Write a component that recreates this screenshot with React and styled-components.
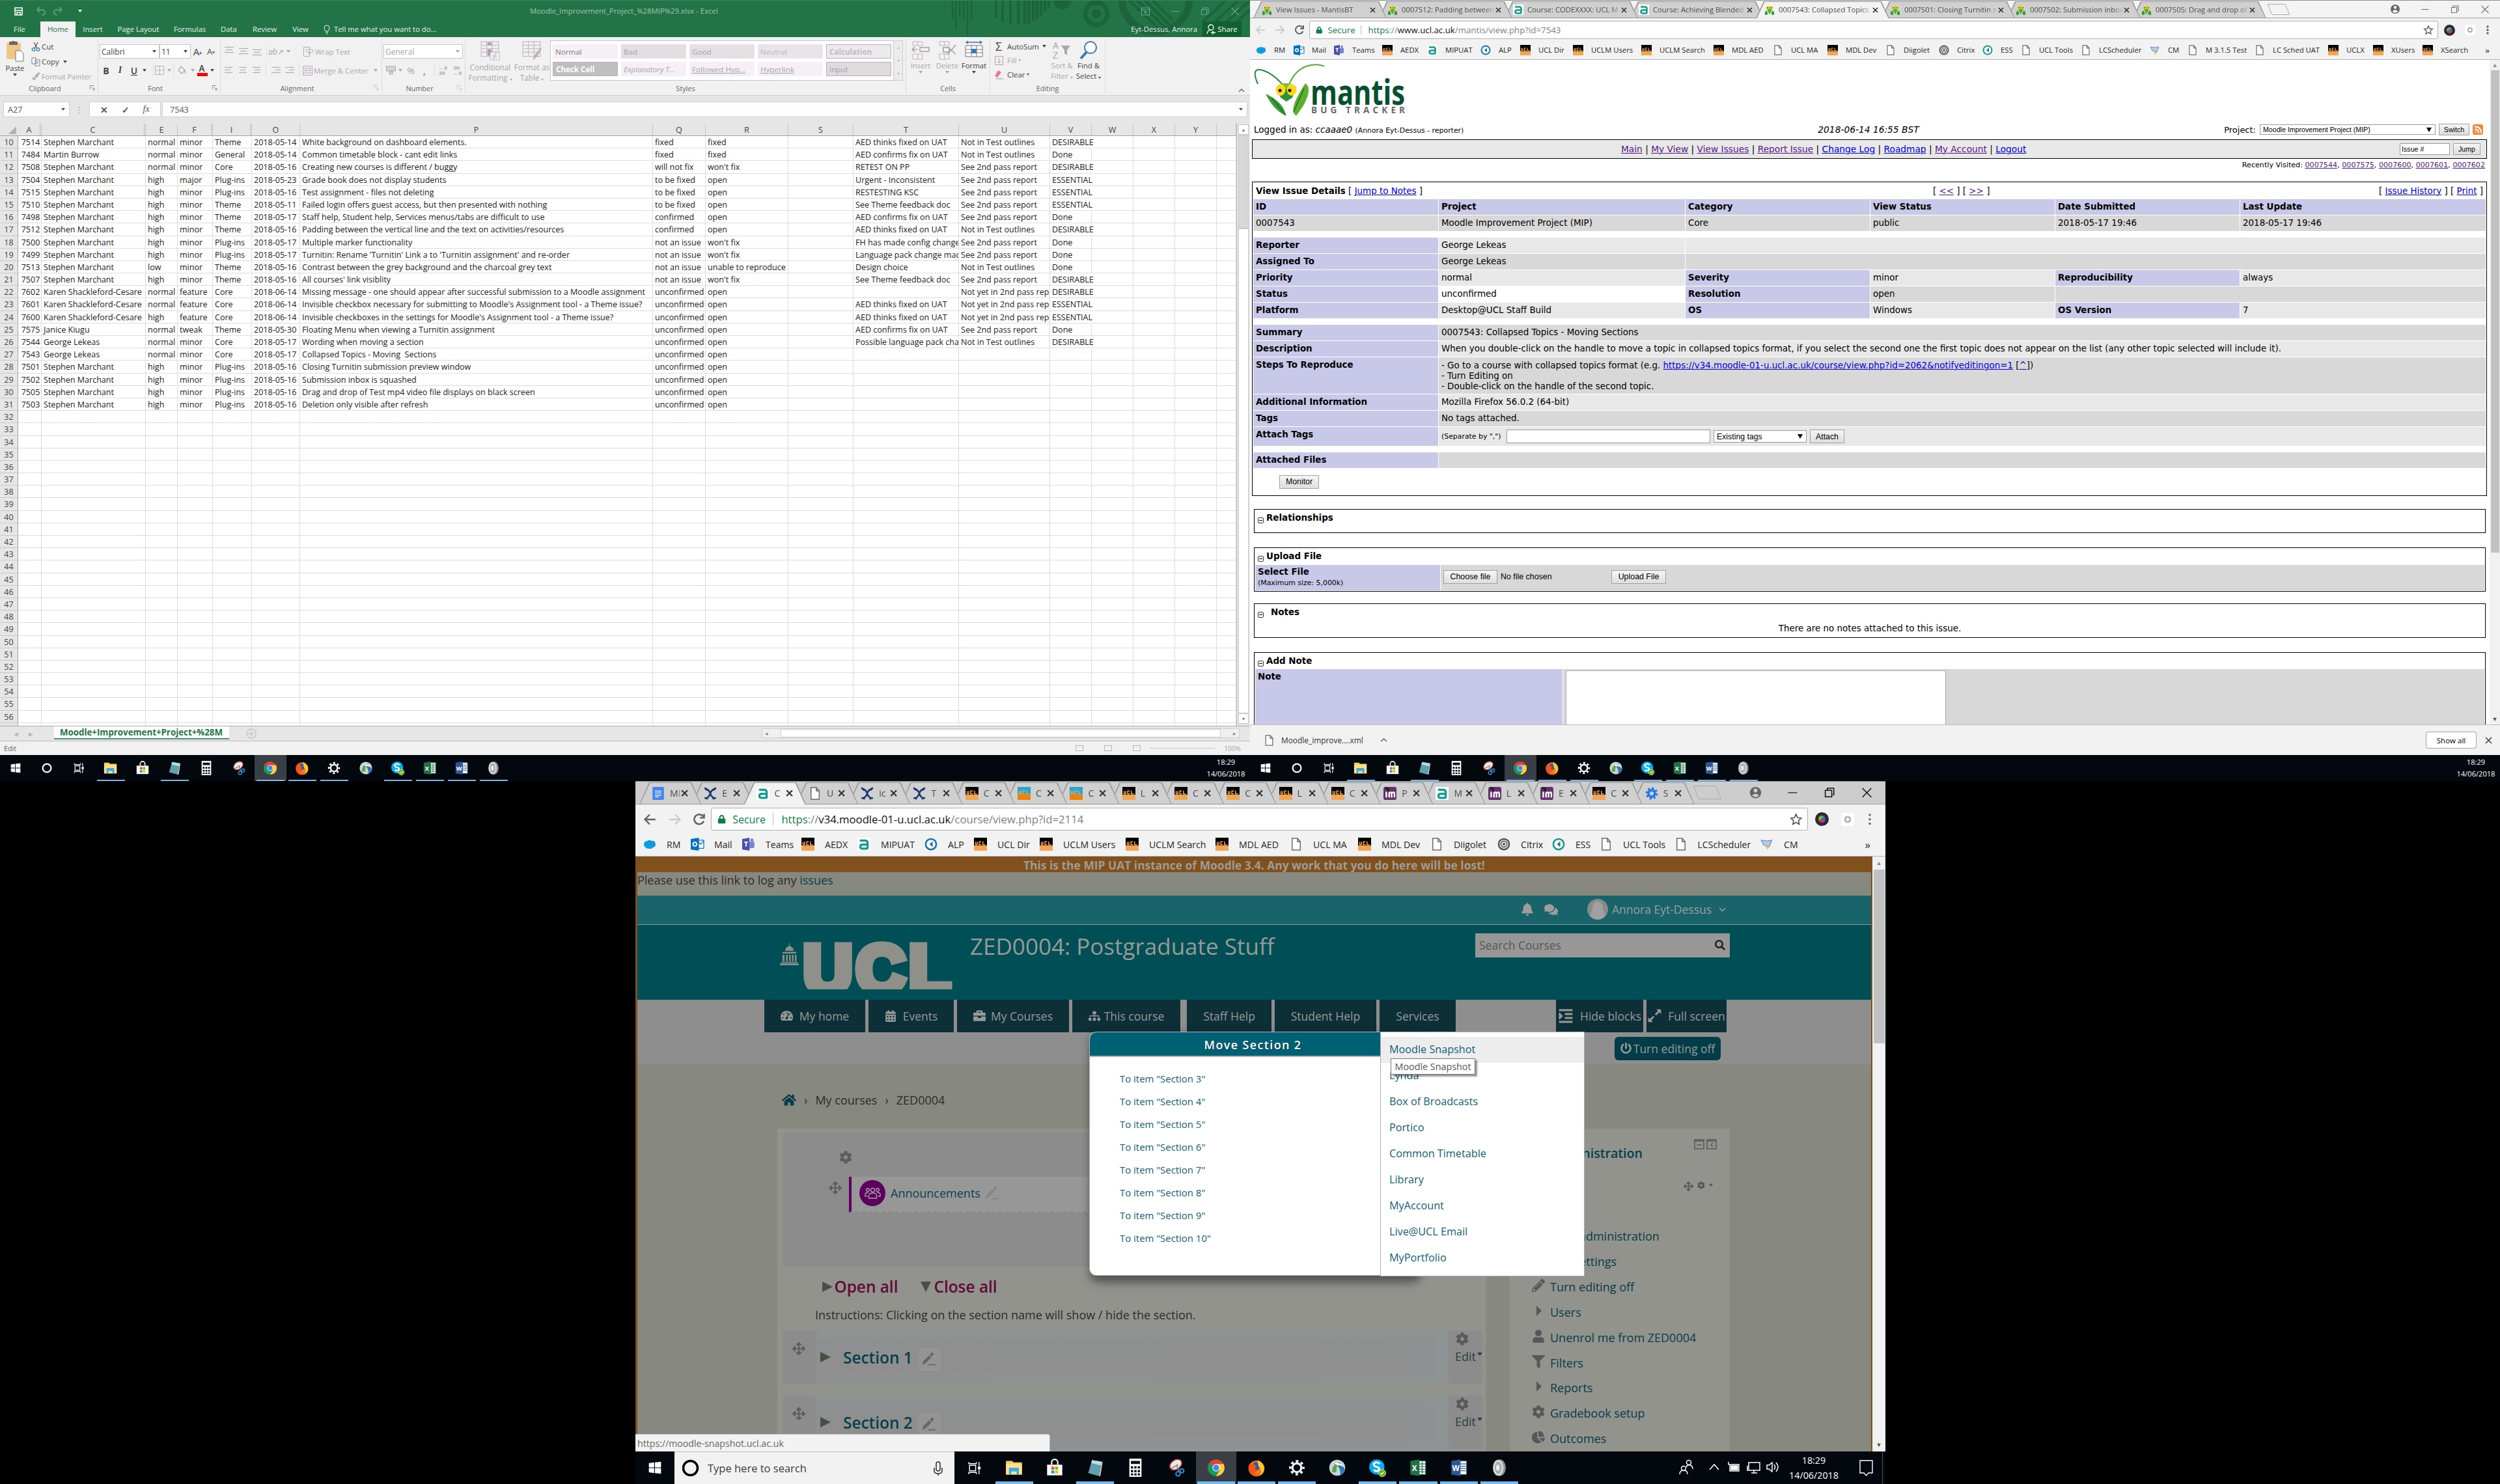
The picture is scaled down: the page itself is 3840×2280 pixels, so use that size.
import React from 'react';
import styled, { createGlobalStyle, css } from 'styled-components';
import {
  FaTachometerAlt, FaCalendarAlt, FaBriefcase, FaSitemap, FaIndent, FaPowerOff, FaBell, FaComments,
  FaSearch, FaHome, FaCog, FaPencilAlt, FaUser, FaFilter, FaChartPie, FaArrowsAlt, FaLock, FaPaintBrush,
} from 'react-icons/fa';

const UI = '"Open Sans", "Noto Sans", sans-serif';
const VERDANA = '"DejaVu Sans", sans-serif';
const ARIAL = '"Liberation Sans", sans-serif';

const Global = createGlobalStyle`
  * { box-sizing: border-box; }
  body { margin: 0; background: #000; }
  svg { display: block; flex: none; overflow: visible; }
`;

const Desktop = styled.main`
  position: relative; width: 3840px; height: 2280px; overflow: hidden;
  background: #000; white-space: nowrap; font-family: ${UI};
`;
const Monitor = styled.section`
  position: absolute; left: ${p => p.$x}px; top: ${p => p.$y}px; width: 1920px; height: ${p => p.$h}px;
  display: flex; flex-direction: column; overflow: hidden;
`;
const Row = styled.div`
  display: flex; align-items: center; flex: none;
  height: ${p => (p.$h ? p.$h + 'px' : 'auto')};
  padding-left: ${p => p.$pl || 0}px; margin-top: ${p => p.$mt || 0}px;
`;
const Slot = styled.span`
  display: flex; flex: none; align-items: center; justify-content: ${p => (p.$left ? 'flex-start' : 'center')};
  width: ${p => p.$w}px; margin-left: ${p => p.$ml || 0}px;
  ${p => p.$dim && css`color: #a9a6a9;`}
`;
const Spring = styled.span`flex: 1;`;
const Caret = styled.i`
  display: inline-block; flex: none; border: ${p => p.$s || 3}px solid transparent; border-bottom: 0;
  border-top-color: currentColor; border-top-width: ${p => (p.$s || 3) + 1}px;
`;

/* ---------- Excel ---------- */

const ExcelTop = styled.header`
  position: relative; flex: none; height: 57px; background: #227447; border-top: 1px solid #3b8159;
  color: #e9f1ec; font-size: 11.3px; overflow: hidden;
`;
const Texture = styled.svg`position: absolute; right: 0; top: 0;`;
const TitleRow = styled.div`
  position: relative; display: flex; align-items: center; height: 32px; color: #a3c4b1;
`;
const DocTitle = styled.span`width: 289px; margin-left: 676px; font-size: 11.37px; line-height: 32px;`;
const TabRow = styled.nav`position: relative; display: flex; height: 24px; line-height: 24px;`;
const RibbonTab = styled.span`
  width: ${p => p.$w}px; text-align: center; flex: none;
  ${p => p.$on && css`background: #f1f1f1; color: #227447; margin: 0 0 0 2px;`}
`;
const TellMe = styled.span`display: flex; align-items: center; gap: 6px; margin-left: 11px;`;
const ShareButton = styled.span`
  display: flex; align-items: center; justify-content: center; gap: 3px; width: 60px; height: 23px;
  margin: 0 13px 0 8px; background: #11602f; color: #fff;
`;

const Ribbon = styled.div`
  display: flex; flex: none; height: 90px; background: #f1f1f1; border-bottom: 1px solid #d0cecf;
  font-size: 11.4px; color: #444;
`;
const Group = styled.section`
  display: flex; flex-direction: column; flex: none; width: ${p => p.$w}px; height: 83px; margin-top: 3px;
  border-right: 1px solid #dadada;
`;
const GroupBody = styled.div`flex: 1; display: flex; flex-direction: ${p => (p.$col ? 'column' : 'row')};`;
const GroupLabel = styled.footer`
  display: flex; justify-content: center; align-items: center; height: 14px; margin-bottom: 1px;
  font-size: 10.9px; color: #666;
  span { flex: 1; text-align: center; }
  svg { margin-right: 4px; }
`;
const Combo = styled.span`
  display: flex; align-items: center; justify-content: space-between; flex: none; width: ${p => p.$w}px; height: 22px;
  margin-left: ${p => p.$ml || 0}px; padding: 0 4px 0 2px; background: #fff; border: 1px solid #c6c6c6;
  color: ${p => (p.$dim ? '#a6a6a6' : '#444')}; font-size: 12px;
`;
const Big = styled.div`
  display: flex; flex-direction: column; align-items: center; width: ${p => p.$w}px; flex: none; line-height: 16px;
  color: ${p => (p.$dim ? '#a9a6a9' : '#444')};
  svg { margin: 3px 0 2px; }
`;
const VRule = styled.i`width: 1px; height: 18px; flex: none; background: #dcdcdc; margin-left: ${p => p.$ml || 0}px;`;
const Gallery = styled.div`
  display: grid; grid-template-columns: repeat(5, 100px); grid-template-rows: 22px 22px; gap: 5px; flex: none;
  width: 528px; height: 62px; margin: 2px 0 0 0; padding: 5px 3px; background: #fff; border: 1px solid #c6c6c6;
`;
const StyleCell = styled.span`
  display: flex; align-items: center; padding-left: 4px; font-size: 11.6px; height: 22px;
  background: ${p => p.$bg}; color: ${p => p.$c || '#a5a2a5'};
  border: ${p => (p.$b ? '1px solid #b5b2b5' : '0')}; font-weight: ${p => (p.$bold ? 700 : 400)};
  font-style: ${p => (p.$i ? 'italic' : 'normal')}; text-decoration: ${p => (p.$u ? 'underline' : 'none')};
`;
const GalleryScroll = styled.div`
  display: flex; flex-direction: column; justify-content: space-around; align-items: center;
  width: 14px; height: 62px; margin-top: 2px; border: 1px solid #cdcdcd; border-left: 0; background: #ececec; color: #bbb;
`;

const FormulaBar = styled.div`
  display: flex; flex: none; height: 43px; padding: 9px 0 0 5px; background: #e6e6e6; font-size: 12.6px; color: #555;
`;
const Field = styled.div`
  display: flex; align-items: center; height: 24px; width: ${p => p.$w}px; margin-left: ${p => p.$ml || 0}px;
  padding: 0 6px; background: #fdfdfd; border: 1px solid #d0d0d0;
`;

const COLS = '28px 36px 160px 49px 54px 60px 74px 542px 81px 127px 100px 162px 140px 64px 64px 64px 64px 30px';
const SheetArea = styled.div`display: flex; flex: none; height: 925px; background: #e6e6e6;`;
const Sheet = styled.div`width: 1900px; height: 925px; overflow: hidden; background: #fff; border-right: 1px solid #b5b5b5;`;
const HeadRow = styled.div`
  display: grid; grid-template-columns: ${COLS}; height: 19px; background: #e6e6e6;
  border-bottom: 1px solid #a5a5a5; font-size: 12.6px; color: #444;
`;
const HeadCell = styled.span`
  text-align: center; line-height: 19.5px; overflow: hidden;
  border-right: ${p => (p.$hiddenAfter ? '3px double #c0c0c0' : '1px solid #c6c6c6')};
`;
const Corner = styled.i`width: 0; height: 0; margin: 4px 0 0 13px; border: 6.5px solid #b1b1b1; border-left-color: transparent; border-top-color: transparent;`;
const SheetRow = styled.div`display: grid; grid-template-columns: ${COLS}; height: 19.2px; font-size: 12.55px; line-height: 20.4px; color: #1c1c1c;`;
const Cell = styled.span`
  height: 19.2px; padding-left: 3px; border-right: 1px solid #dcdcdc; border-bottom: 1px solid #dcdcdc;
  overflow: ${p => (p.$spill ? 'visible' : 'hidden')}; text-align: ${p => (p.$num ? 'center' : 'left')};
  ${p => p.$spill && css`border-right-color: transparent;`}
`;
const RowNo = styled.span`height: 19.2px; background: #e6e6e6; color: #444; text-align: center; border-right: 1px solid #a5a5a5; border-bottom: 1px solid #cacaca;`;
const SheetScroll = styled.div`display: flex; flex-direction: column; width: 20px; padding: 1px 2px 0; align-items: center;`;
const ScrollKnob = styled.div`
  display: flex; align-items: center; justify-content: center; flex: none; width: 16px; height: ${p => p.$h}px;
  background: ${p => p.$bg || '#fff'}; border: 1px solid #c8c8c8; font-size: 7px; color: #777;
`;
const SheetTabs = styled.div`
  display: flex; flex: none; height: 24px; background: #e6e6e6; border-top: 1px solid #ababab; border-bottom: 1px solid #bdbdbd;
  color: #b9b9b9; font-size: 9px;
`;
const SheetTab = styled.span`
  width: 269px; height: 20px; margin-left: 31px; padding-left: 9px; background: #fff; border-bottom: 2px solid #4a9168;
  font: 700 13.3px/18px ${UI}; color: #227447;
`;
const HScroll = styled.div`
  display: flex; align-items: center; justify-content: space-between; width: 734px; height: 15px; margin: 3px 16px 0 auto;
  padding: 0 4px; border: 1px solid #cfcfcf; color: #888; background: #f0f0f0;
  i { width: 676px; height: 13px; background: #fff; border: 1px solid #cfcfcf; }
`;
const StatusBar = styled.div`
  display: flex; align-items: center; gap: 14px; flex: none; height: 21px; padding: 0 14px 0 6px; background: #f1f1f1;
  font-size: 10.8px; color: #666;
  i { width: 12px; height: 9px; border: 1px solid #b5b5b5; }
`;
const Zoom = styled.b`width: 100px; height: 1px; background: #c9c9c9;`;

const PEOPLE = { S: 'Stephen Marchant', K: 'Karen Shackleford-Cesare', G: 'George Lekeas', M: 'Martin Burrow', J: 'Janice Kiugu' };
const AT = 'AED thinks fixed on UAT', AC = 'AED confirms fix on UAT', NT = 'Not in Test outlines', SP = 'See 2nd pass report', NY = 'Not yet in 2nd pass report';
const ISSUES = [
  ['7514', 'S', 'normal', 'minor', 'Theme', '2018-05-14', 'White background on dashboard elements.', 'fixed', 'fixed', AT, NT, 'DESIRABLE'],
  ['7484', 'M', 'normal', 'minor', 'General', '2018-05-14', 'Common timetable block - cant edit links', 'fixed', 'fixed', AC, NT, 'Done'],
  ['7508', 'S', 'normal', 'minor', 'Core', '2018-05-16', 'Creating new courses is different / buggy', 'will not fix', "won't fix", 'RETEST ON PP', SP, 'DESIRABLE'],
  ['7504', 'S', 'high', 'major', 'Plug-ins', '2018-05-23', 'Grade book does not display students', 'to be fixed', 'open', 'Urgent - Inconsistent', SP, 'ESSENTIAL'],
  ['7515', 'S', 'high', 'minor', 'Plug-ins', '2018-05-16', 'Test assignment - files not deleting', 'to be fixed', 'open', 'RESTESTING KSC', SP, 'ESSENTIAL'],
  ['7510', 'S', 'high', 'minor', 'Theme', '2018-05-11', 'Failed login offers guest access, but then presented with nothing', 'to be fixed', 'open', 'See Theme feedback doc', SP, 'ESSENTIAL'],
  ['7498', 'S', 'high', 'minor', 'Theme', '2018-05-17', 'Staff help, Student help, Services menus/tabs are difficult to use', 'confirmed', 'open', AC, SP, 'Done'],
  ['7512', 'S', 'high', 'minor', 'Theme', '2018-05-16', 'Padding between the vertical line and the text on activities/resources', 'confirmed', 'open', AT, NT, 'DESIRABLE'],
  ['7500', 'S', 'high', 'minor', 'Plug-ins', '2018-05-17', 'Multiple marker functionality', 'not an issue', "won't fix", 'FH has made config change', SP, 'Done'],
  ['7499', 'S', 'high', 'minor', 'Plug-ins', '2018-05-17', "Turnitin: Rename 'Turnitin' Link a to 'Turnitin assignment' and re-order", 'not an issue', "won't fix", 'Language pack change made', SP, 'Done'],
  ['7513', 'S', 'low', 'minor', 'Theme', '2018-05-16', 'Contrast between the grey background and the charcoal grey text', 'not an issue', 'unable to reproduce', 'Design choice', NT, 'Done'],
  ['7507', 'S', 'high', 'minor', 'Theme', '2018-05-16', "All courses' link visiblity", 'not an issue', "won't fix", 'See Theme feedback doc', SP, 'DESIRABLE'],
  ['7602', 'K', 'normal', 'feature', 'Core', '2018-06-14', 'Missing message - one should appear after successful submission to a Moodle assignment', 'unconfirmed', 'open', '', NY, 'DESIRABLE'],
  ['7601', 'K', 'normal', 'feature', 'Core', '2018-06-14', "Invisible checkbox necessary for submitting to Moodle's Assignment tool - a Theme issue?", 'unconfirmed', 'open', AT, NY, 'ESSENTIAL'],
  ['7600', 'K', 'high', 'feature', 'Core', '2018-06-14', "Invisible checkboxes in the settings for Moodle's Assignment tool - a Theme issue?", 'unconfirmed', 'open', AT, NY, 'ESSENTIAL'],
  ['7575', 'J', 'normal', 'tweak', 'Theme', '2018-05-30', 'Floating Menu when viewing a Turnitin assignment', 'unconfirmed', 'open', AC, SP, 'Done'],
  ['7544', 'G', 'normal', 'minor', 'Core', '2018-05-17', 'Wording when moving a section', 'unconfirmed', 'open', 'Possible language pack change', NT, 'DESIRABLE'],
  ['7543', 'G', 'normal', 'minor', 'Core', '2018-05-17', 'Collapsed Topics - Moving\u00a0 Sections', 'unconfirmed', 'open', '', '', ''],
  ['7501', 'S', 'high', 'minor', 'Plug-ins', '2018-05-16', 'Closing Turnitin submission preview window', 'unconfirmed', 'open', '', '', ''],
  ['7502', 'S', 'high', 'minor', 'Plug-ins', '2018-05-16', 'Submission inbox is squashed', 'unconfirmed', 'open', '', '', ''],
  ['7505', 'S', 'high', 'minor', 'Plug-ins', '2018-05-16', 'Drag and drop of Test mp4 video file displays on black screen', 'unconfirmed', 'open', '', '', ''],
  ['7503', 'S', 'high', 'minor', 'Plug-ins', '2018-05-16', 'Deletion only visible after refresh', 'unconfirmed', 'open', '', '', ''],
];

const Lines = ({ w = [14, 10, 14], y = [2, 6, 10], x = [0, 0, 0], c = '#b0adb0' }) => (
  <svg width="14" height="14" stroke={c} strokeWidth="1.2">
    {y.map((v, i) => <path key={i} d={`M${x[i]} ${v + 0.5}h${w[i]}`} />)}
  </svg>
);
const TableIcon = ({ s = 28, extra, dark }) => (
  <svg width={s} height={s} viewBox="0 0 28 28" fill="none" stroke="#bcb8bc">
    <rect x="1" y="1" width="25" height="21" fill="#f4eef4" />
    <path d="M1 6h25M1 11h25M1 16h25M9 1v21M17 1v21" />
    {dark && <path d="M10 2h6v4h-6zM10 12h6v9h-6z" fill="#a8a4a8" stroke="none" />}
    {extra}
  </svg>
);
const InsertCells = ({ cross }) => (
  <svg width="28" height="28" viewBox="0 0 28 28" fill="#f6f0f6" stroke="#b9b4b9">
    <path d="M2 1h15v6H2zM2 20h15v8H2zM9.500 1v6M9.500 20v8" />
    {cross ? <path d="M14 9l13 11M27 6L14 21M8 10h9v7H8z" stroke="#a39fa3" strokeWidth="1.600" /> : <path d="M1 13h8M5 9l-4 4 4 4M13 10h14v6H13z" stroke="#a39fa3" strokeWidth="1.500" />}
  </svg>
);
const Launcher = ({ dim }) => (
  <svg width="8" height="8" fill="none" stroke={dim ? '#c5c5c5' : '#888'}><path d="M.5 6V.5H6M3 3l4 4M7 4v3H4" /></svg>
);

function ExcelRibbon() {
  return (
    <Ribbon>
      <Group $w={151}>
        <GroupBody>
          <Big $w={46}>
            <svg width="30" height="32" viewBox="0 0 30 32">
              <path d="M2 3h22v25H2z" fill="#edc886" /><path d="M6 1h13v5H6z" fill="#6b6b6b" /><path d="M10 0h5v3h-5z" fill="#6b6b6b" />
              <path d="M16 15h8l4 4v12H16z" fill="#fff" stroke="#777" />
            </svg>
            Paste<Caret />
          </Big>
          <div>
            <Row $h={23}><Slot $w={18}>
              <svg width="14" height="14" fill="none" stroke="#555" strokeWidth="1.300"><path d="M4 0l5 9M10 0L5 9" /><g stroke="#3c78b4"><circle cx="3.500" cy="11" r="2.300" /><circle cx="10.500" cy="11" r="2.300" /></g></svg>
            </Slot>Cut</Row>
            <Row $h={23}><Slot $w={18}>
              <svg width="14" height="14" fill="#fff" stroke="#6d7f92"><path d="M1 1h6v9H1zM6 4h7v9H6zM8 7h3M8 9h3" /></svg>
            </Slot>Copy<Slot $w={18}><Caret /></Slot></Row>
            <Row $h={22}><Slot $w={18}><FaPaintBrush size={12} color="#b3b0b3" /></Slot><Slot $w={76} $left $dim style={{ fontSize: 10.9 }}>Format Painter</Slot></Row>
          </div>
        </GroupBody>
        <GroupLabel><span>Clipboard</span><Launcher /></GroupLabel>
      </Group>
      <Group $w={188}>
        <GroupBody $col>
          <Row $mt={8} $h={22}>
            <Combo $w={92} $ml={2}>Calibri<Caret /></Combo><Combo $w={48}>11<Caret /></Combo>
            <Slot $w={21} style={{ fontSize: 15 }}>A<sup style={{ fontSize: 8, color: '#3c78b4' }}>▴</sup></Slot>
            <Slot $w={20} style={{ fontSize: 13 }}>A<sup style={{ fontSize: 8, color: '#3c78b4' }}>▾</sup></Slot>
          </Row>
          <Row $mt={7} $h={22}>
            <Slot $w={20} $ml={2} style={{ fontSize: 14 }}><b>B</b></Slot>
            <Slot $w={23} style={{ fontSize: 14, fontStyle: 'italic', fontFamily: 'Liberation Serif' }}><b>I</b></Slot>
            <Slot $w={20} style={{ fontSize: 14, fontWeight: 600 }}><u>U</u></Slot><Slot $w={12}><Caret /></Slot><VRule $ml={7} />
            <Slot $w={17}><svg width="14" height="15" fill="#f6eef6" stroke="#b9b2b9"><path d="M.5.5h13v13H.5zM7 .5v13M.5 7h13" /></svg></Slot>
            <Slot $w={13} $dim><Caret /></Slot><VRule />
            <Slot $w={24}><svg width="14" height="14" fill="none" stroke="#aaa6aa" strokeWidth="1.300"><path d="M6 1l6 6-5 5-5-5zM12 8l1 4" /></svg></Slot>
            <Slot $w={10} $dim><Caret /></Slot>
            <Slot $w={20}><svg width="16" height="18"><text x="2.500" y="11" fontSize="13.500" fontWeight="600" fill="#444">A</text><path d="M0 13h16v5H0z" fill="#f00" /></svg></Slot>
            <Slot $w={10}><Caret /></Slot>
          </Row>
        </GroupBody>
        <GroupLabel><span>Font</span><Launcher /></GroupLabel>
      </Group>
      <Group $w={248}>
        <GroupBody $col>
          <Row $mt={8} $h={22}>
            <Slot $w={26}><Lines y={[0, 4, 8]} x={[0, 2, 0]} /></Slot><Slot $w={18}><Lines x={[0, 2, 0]} /></Slot><Slot $w={24}><Lines y={[4, 8, 12]} x={[0, 2, 0]} /></Slot>
            <VRule $ml={2} /><Slot $w={28} $dim style={{ fontSize: 12 }}><i>ab</i>↗</Slot><Slot $w={10} $dim><Caret /></Slot>
            <Slot $w={14} $ml={18}><svg width="15" height="15" fill="#f6eef6" stroke="#b0acb0"><path d="M.5.5h9v14h-9zM3 4h9q3 0 3 2.500T12 9H7M9 7L7 9l2 2M3 7h3" /></svg></Slot><Slot $w={60} $left $ml={4} $dim>Wrap Text</Slot>
          </Row>
          <Row $mt={7} $h={22}>
            <Slot $w={26}><Lines w={[12, 9, 12]} /></Slot><Slot $w={18}><Lines w={[12, 8, 12]} x={[0, 2, 0]} /></Slot><Slot $w={24}><Lines w={[12, 9, 12]} x={[0, 3, 0]} /></Slot>
            <VRule $ml={1} /><Slot $w={24} $ml={3} $dim><Lines w={[14, 8, 14]} x={[0, 6, 0]} /></Slot><Slot $w={18} $dim><Lines w={[14, 8, 14]} x={[0, 6, 0]} /></Slot><VRule $ml={5} />
            <Slot $w={16} $ml={4}><svg width="15" height="15" fill="#f6eef6" stroke="#b0acb0"><path d="M.5.5h14v14H.5zM.5 4h14M.5 11h14M3 7.500h9M5 5.500l-2 2 2 2M10 5.500l2 2-2 2" /></svg></Slot>
            <Slot $w={87} $left $ml={2} $dim>Merge & Center</Slot><Slot $w={16} $dim><Caret /></Slot>
          </Row>
        </GroupBody>
        <GroupLabel><span>Alignment</span><Launcher dim /></GroupLabel>
      </Group>
      <Group $w={128}>
        <GroupBody $col>
          <Row $mt={8} $h={22}><Combo $w={122} $ml={2} $dim>General<Caret /></Combo></Row>
          <Row $mt={7} $h={22}>
            <Slot $w={22} $ml={2}><svg width="15" height="14" fill="#d8d4d8" stroke="#a9a5a9"><path d="M.5 1h14v7H.5zM5 9h5v4H5z" /></svg></Slot><Slot $w={8} $dim><Caret /></Slot>
            <Slot $w={24} $dim style={{ fontSize: 14 }}>%</Slot><Slot $w={18} $dim style={{ fontSize: 17 }}><b>,</b></Slot><VRule $ml={6} />
            <Slot $w={24} $dim style={{ fontSize: 7.5, lineHeight: '8px', whiteSpace: 'pre' }}><b>{'←.0\n.00'}</b></Slot>
            <Slot $w={20} $dim style={{ fontSize: 7.5, lineHeight: '8px', whiteSpace: 'pre' }}><b>{'.00\n→.0'}</b></Slot>
          </Row>
        </GroupBody>
        <GroupLabel><span>Number</span><Launcher dim /></GroupLabel>
      </Group>
      <Group $w={677}>
        <GroupBody>
          <Big $w={76} $dim style={{ fontSize: 11.7 }}><TableIcon s={30} dark extra={<g><rect x="14" y="16" width="13" height="11" fill="#f7f3f7" /><path d="M17 20h7M17 23h7M22 17l-3 9" /></g>} />Conditional<span>Formatting <Caret $s={2} /></span></Big>
          <Big $w={52} $dim style={{ fontSize: 11.7, marginRight: 2 }}><TableIcon s={30} extra={<path d="M27 9l-9 11-3 7 6-4 7-12z" fill="#b5b1b5" stroke="none" />} />Format as<span>Table <Caret $s={2} /></span></Big>
          <Gallery>
            <StyleCell $bg="#f6f0f6" $c="#7d7a7d">Normal</StyleCell><StyleCell $bg="#e2dee2">Bad</StyleCell><StyleCell $bg="#e4e0e4">Good</StyleCell><StyleCell $bg="#e9e4e9" $c="#bab6ba">Neutral</StyleCell><StyleCell $bg="#eee9ee" $b $bold $c="#c0bcc0">Calculation</StyleCell>
            <StyleCell $bg="#c1bec1" $b $bold $c="#fff">Check Cell</StyleCell><StyleCell $bg="#f6f0f6" $i>Explanatory T...</StyleCell><StyleCell $bg="#f6f0f6" $u>Followed Hyp...</StyleCell><StyleCell $bg="#f6f0f6" $u>Hyperlink</StyleCell><StyleCell $bg="#dedade" $b>Input</StyleCell>
          </Gallery>
          <GalleryScroll><Caret $s={2} style={{ transform: 'scaleY(-1)' }} /><Caret $s={2} /><Caret $s={2} /></GalleryScroll>
        </GroupBody>
        <GroupLabel><span>Styles</span></GroupLabel>
      </Group>
      <Group $w={129}>
        <GroupBody>
          <Big $w={44} $dim><InsertCells />Insert<Caret /></Big>
          <Big $w={38} $dim><InsertCells cross />Delete<Caret /></Big>
          <Big $w={44}>
            <svg width="28" height="28" viewBox="0 0 28 28" fill="#fff" stroke="#777"><path d="M1 7h26v17H1zM1 13h26M1 18h26M10 7v17M18 7v17" /><path d="M10 12h8v7h-8z" fill="#3c78b4" stroke="none" /><path d="M2 2h24M5 0L2 2l3 2M23 0l3 2-3 2" stroke="#3c78b4" strokeWidth="1.500" /></svg>
            Format<Caret />
          </Big>
        </GroupBody>
        <GroupLabel><span>Cells</span></GroupLabel>
      </Group>
      <Group $w={177}>
        <GroupBody>
          <div>
            <Row $h={22}><Slot $w={26} style={{ fontSize: 18 }}>Σ</Slot><Slot $w={50} $left>AutoSum</Slot><Slot $w={14}><Caret /></Slot></Row>
            <Row $h={21}><Slot $w={26}><svg width="13" height="14" fill="#f4eef4" stroke="#aaa6aa"><path d="M.5.5h12v13H.5zM6.500 3v8M4 8l2.500 3L9 8" /></svg></Slot><Slot $left $w={30} $dim>Fill&nbsp;<Caret $s={2} /></Slot></Row>
            <Row $h={23}><Slot $w={26}><svg width="14" height="14"><path d="M6 0l5 3-6 8-4-2z" fill="#e8798c" /><path d="M3 13h11" stroke="#999" /></svg></Slot>Clear&nbsp;<Caret $s={2} /></Row>
          </div>
          <Big $w={40} $dim><svg width="28" height="28" viewBox="0 0 28 28"><text x="0" y="12" fontSize="14" fill="#aaa6aa">A</text><text x="0" y="27" fontSize="14" fill="#aaa6aa">Z</text><path d="M13 7h14l-5 7v8l-4-3v-5z" fill="#aaa6aa" /></svg>Sort &<span>Filter <Caret $s={2} /></span></Big>
          <Big $w={42}><svg width="28" height="28" viewBox="0 0 28 28" fill="none" stroke="#3c78b4"><circle cx="17" cy="10" r="9" strokeWidth="2" fill="#fff" /><path d="M11 17L2 27" strokeWidth="4" /></svg>Find &<span>Select <Caret $s={2} /></span></Big>
        </GroupBody>
        <GroupLabel><span>Editing</span></GroupLabel>
      </Group>
      <Spring />
      <Slot $w={26} style={{ alignItems: 'flex-end', paddingBottom: 4 }}><svg width="8" height="6" fill="none" stroke="#666" strokeWidth="1.500"><path d="M0 5l4-4 4 4" /></svg></Slot>
    </Ribbon>
  );
}

function Excel() {
  return (
    <Monitor $x={0} $y={0} $h={1200}>
      <ExcelTop>
        <Texture width="470" height="57" fill="none" stroke="#1c643c">
          <path d="M13 0v28M18 0v44M24 0v24M30 0v30M36 0v58M42 0v30" strokeWidth="2.500" />
          <path d="M80 0v26M90 0v33M102 0v37M114 0v37M124 0v36M130 0v35M137 0v32M143 0v29M149 0v24M155 0v18M161 0v12" strokeWidth="4" />
          <circle cx="182" cy="0" r="13" fill="#1c643c" /><circle cx="234" cy="20" r="17" strokeWidth="7" /><circle cx="234" cy="20" r="4" strokeWidth="6" />
          <circle cx="325" cy="-4" r="52" strokeWidth="11" /><path d="M285 0l50 48M297 0l46 44M309 0l38 38M321 0l30 30M420 45l50-45M408 40l44-40M396 34l36-34M432 50l38-36" strokeWidth="4" />
        </Texture>
        <TitleRow>
          <Slot $w={56} $left style={{ paddingLeft: 22 }}><svg width="13" height="13" fill="none" stroke="#fff" strokeWidth="1.600"><path d="M1 1h11v11H1zM1 4v1h11M4 12V8h5v4" /></svg></Slot>
          <Slot $w={26} $left><svg width="16" height="12" fill="none" stroke="#5f9b7a" strokeWidth="1.800"><path d="M5 0L1 4l4 4M1 4h7q5 0 5 4t-5 4" /></svg></Slot>
          <Slot $w={26} $left><svg width="16" height="12" fill="none" stroke="#5f9b7a" strokeWidth="1.800"><path d="M9 0l4 4-4 4M13 4H6Q1 4 1 8t5 4" /></svg></Slot>
          <Slot $w={30} style={{ color: '#fff' }}><Caret $s={3} /></Slot>
          <DocTitle>Moodle_Improvement_Project_%28MIP%29.xlsx - Excel</DocTitle>
          <Spring />
          <WinControls $gap={46} $c="#6ea387" $n={4} />
        </TitleRow>
        <TabRow>
          <RibbonTab $w={60}>File</RibbonTab><RibbonTab $w={54} $on>Home</RibbonTab><RibbonTab $w={53}>Insert</RibbonTab>
          <RibbonTab $w={87}>Page Layout</RibbonTab><RibbonTab $w={71}>Formulas</RibbonTab><RibbonTab $w={49}>Data</RibbonTab>
          <RibbonTab $w={61}>Review</RibbonTab><RibbonTab $w={49}>View</RibbonTab>
          <TellMe><svg width="10" height="15" fill="none" stroke="#e9f1ec"><path d="M3 10Q1 7 1 5a4 4 0 0 1 8 0q0 2-2 5zM3 12h4M4 14h2" /></svg>Tell me what you want to do...</TellMe>
          <Spring /><span>Eyt-Dessus, Annora</span>
          <ShareButton><svg width="14" height="16" fill="none" stroke="#fff" strokeWidth="1.300"><circle cx="7" cy="5" r="4" /><path d="M1 15q1-6 6-6M10 10v6M7 13h7" /></svg>Share</ShareButton>
        </TabRow>
      </ExcelTop>
      <ExcelRibbon />
      <FormulaBar>
        <Field $w={102}>A27<Spring /><Caret /></Field>
        <Slot $w={12} $ml={8} style={{ height: 24, color: '#aaa' }}>⋮</Slot>
        <Field $w={110} $ml={10} style={{ justifyContent: 'space-around', fontSize: 14 }}><b>✕</b><b>✓</b><i style={{ fontFamily: 'Liberation Serif' }}>fx</i></Field>
        <Field $w={1667} $ml={2} style={{ paddingLeft: 11 }}>7543<Spring /><Caret /></Field>
      </FormulaBar>
      <SheetArea>
        <Sheet>
          <HeadRow>
            {['', 'A', 'C', 'E', 'F', 'I', 'O', 'P', 'Q', 'R', 'S', 'T', 'U', 'V', 'W', 'X', 'Y', ''].map((c, i) => (
              i === 0 ? <Corner key={i} /> : <HeadCell key={i} $hiddenAfter={[1, 2, 4, 5].includes(i)}>{c}</HeadCell>
            ))}
          </HeadRow>
          {Array.from({ length: 48 }, (_, n) => {
            const r = ISSUES[n];
            const cells = r ? [r[0], PEOPLE[r[1]], r[2], r[3], r[4], r[5], r[6], r[7], r[8], '', r[9], r[10], r[11], '', '', '', ''] : Array(17).fill('');
            return (
              <SheetRow key={n}>
                <RowNo>{n + 10}</RowNo>
                {cells.map((c, i) => <Cell key={i} $num={i === 0} $spill={i === 12 && c.length > 5}>{c}</Cell>)}
              </SheetRow>
            );
          })}
        </Sheet>
        <SheetScroll>
          <ScrollKnob $h={16}>▲</ScrollKnob><ScrollKnob $h={144} $bg="#d8d8d8" /><ScrollKnob $h={745} /><ScrollKnob $h={16}>▼</ScrollKnob>
        </SheetScroll>
      </SheetArea>
      <SheetTabs>
        <Slot $w={8} $ml={20}>◀</Slot><Slot $w={10} $ml={14}>▶</Slot>
        <SheetTab>Moodle+Improvement+Project+%28M</SheetTab>
        <Slot $w={18} $ml={25}><svg width="16" height="16" fill="none" stroke="#c3c3c3" strokeWidth="1.300"><circle cx="8" cy="8" r="7" /><path d="M8 4v8M4 8h8" /></svg></Slot>
        <HScroll>◂<i />▸</HScroll>
      </SheetTabs>
      <StatusBar>Edit<Spring /><i /><Slot $w={4} /><i /><Slot $w={4} /><i /><Zoom /><Slot $w={26} $dim style={{ fontSize: 10 }}>100%</Slot></StatusBar>
      <Taskbar />
    </Monitor>
  );
}

/* ---------- Window controls & taskbar ---------- */

const Controls = styled.div`display: flex; align-items: center; flex: none; svg { width: ${p => p.$gap}px; }`;
function WinControls({ $gap, $c, $n = 3, $k = 1, profile }) {
  const s = 11 * $k, x = ($gap - s) / 2;
  const art = { height: s, fill: 'none', stroke: $c, strokeWidth: 1.2 };
  return (
    <Controls $gap={$gap}>
      {$n === 4 && <svg {...art}><g transform={`translate(${x})`}><path d="M0 0h12v11H0zM0 3h12M6 10V5M4 7l2-2 2 2" /></g></svg>}
      {profile && <svg fill="#666" viewBox="0 0 14 14" height={14 * $k}><path fillRule="evenodd" d="M7 0a7 7 0 1 1 0 14A7 7 0 0 1 7 0zm0 2a2.300 2.300 0 1 0 0 4.700A2.300 2.300 0 0 0 7 2zM2.800 10.500q4.200 4.500 8.400 0-1.500-2.200-4.200-2.200t-4.200 2.200z" /></svg>}
      <svg {...art}><path d={`M${x} ${s / 2}h${s}`} /></svg>
      <svg {...art}><g transform={`translate(${x}) scale(${$k})`}><path d="M0 2.500h8v8H0zM2.500 2V0h8v8H9" /></g></svg>
      <svg {...art}><g transform={`translate(${x}) scale(${$k})`}><path d="M0 0l11 11M11 0L0 11" /></g></svg>
    </Controls>
  );
}

const Bar = styled.footer`
  display: flex; flex: none; height: ${p => p.$h}px; background: #03080f; color: #fff;
`;
const TaskButton = styled.span`
  display: flex; align-items: center; justify-content: center; flex: none; width: ${p => p.$w}px;
  background: ${p => (p.$active ? '#3a3f45' : 'transparent')};
  border-bottom: ${p => p.$u}px solid transparent; border-top: ${p => p.$u}px solid transparent;
  ${p => p.$open && css`border-image: linear-gradient(90deg, transparent 9%, #76b9ed 9%, #76b9ed 91%, transparent 91%) ${p.$u}; border-top-width: 0; padding-top: ${p.$u}px; border-image-width: 0 0 ${p.$u}px 0;`}
`;
const ClockText = styled.time`
  display: flex; flex-direction: column; justify-content: center; align-items: center; text-align: center;
  font-size: ${p => p.$f}px; line-height: ${p => p.$f * 1.62}px; width: ${p => p.$w}px; margin-right: ${p => p.$mr}px;
`;
const SearchBox = styled.div`
  display: flex; align-items: center; width: 430px; flex: none; padding: 0 18px 0 11px; background: #f2f2f2; border-top: 1px solid #bbb;
  font-size: 16.5px; color: #3b3b3b; justify-content: space-between;
  span { flex: 1; padding-left: 13px; }
`;

const ART = {
  start: <path d="M4 6l7-1v6.500H4zM12 5l8-1v7.500h-8zM4 12.500h7V19l-7-1zM12 12.500h8V20l-8-1z" fill="#fff" />,
  cortana: <circle cx="12" cy="12" r="7" fill="none" stroke="#fff" strokeWidth="2.400" />,
  task: <g fill="none" stroke="#fff" strokeWidth="1.400"><path d="M5 8h9v8H5zM4 3v2.500h11V3M4 21v-2.500h11V21M19 3v6M19 15v6" /><path d="M18 10.500h2.500v3H18z" fill="#fff" /></g>,
  explorer: <g><path d="M1 3h8l2 2h11v16H1z" fill="#f5cf63" /><path d="M1 7h21v14H1z" fill="#fde08a" /><path d="M5 12h13v9h-3v-4H8v4H5z" fill="#3ea9e5" /></g>,
  store: <g><path d="M2 8h20v14H2z" fill="#fff" /><path d="M8 8V5a4 4 0 0 1 8 0v3" fill="none" stroke="#fff" strokeWidth="1.800" /><path d="M7.500 10.500h4v4h-4z" fill="#f25022" /><path d="M12.500 10.500h4v4h-4z" fill="#7fba00" /><path d="M7.500 15.500h4v4h-4z" fill="#00a4ef" /><path d="M12.500 15.500h4v4h-4z" fill="#ffb900" /></g>,
  notepad: <g><path d="M8 2l13 2-4 19-14-4z" fill="#5f9fb0" /><path d="M8 2l13 2-1 5-13-3z" fill="#b9dce4" /><path d="M17 23l4-19 1 1-3 18z" fill="#d8c9b0" /></g>,
  calc: <g><path d="M4 0h16v24H4z" fill="#fff" /><path d="M6 3h12v4H6zM6 10h3v3H6zM10.500 10h3v3h-3zM15 10h3v3h-3zM6 15h3v3H6zM10.500 15h3v3h-3zM15 15h3v3h-3zM6 19.500h3v2.500H6zM10.500 19.500h3v2.500h-3zM15 19.500h3v2.500h-3z" fill="#0a0f16" /></g>,
  snip: <g fill="none"><ellipse cx="12" cy="8" rx="8.500" ry="6" transform="rotate(-35 12 8)" fill="#e9e9e9" stroke="#cf3a3a" strokeWidth="1.400" /><path d="M6 13l9-5M13 8l3 9" stroke="#888" strokeWidth="1.500" /><circle cx="15" cy="20" r="2.800" stroke="#2a86c8" strokeWidth="1.800" /><circle cx="20" cy="16" r="2.500" stroke="#2a86c8" strokeWidth="1.800" /></g>,
  chrome: <g><circle cx="12" cy="12" r="11" fill="#db4437" /><path d="M12 12L2.500 6.500A11 11 0 0 0 12 23l4.800-8.200z" fill="#0f9d58" /><path d="M12 7h9.800A11 11 0 0 1 12 23l4.800-8z" fill="#ffcd40" /><circle cx="12" cy="12" r="5" fill="#fff" /><circle cx="12" cy="12" r="4" fill="#4285f4" /></g>,
  firefox: <g><circle cx="12" cy="13" r="10.500" fill="#ff7a13" /><circle cx="11" cy="10" r="5.500" fill="#1f5fa8" /><path d="M14 2q7 4 8 10 0 7-5 10 2-5 0-9-4-3-3-11z" fill="#ffc62e" /><path d="M2 8q-2 8 3 12 5 4 11 1-6 0-8-3 4 0 6-3-3 0-4-3l2-2q-3-1-4-5-2 1-2 3-2-1-4 0z" fill="#f5521c" /></g>,
  gear: <g fill="none" stroke="#fff"><circle cx="12" cy="12" r="5.800" strokeWidth="2.600" /><circle cx="12" cy="12" r="8.600" strokeWidth="3" strokeDasharray="3.300 3.454" strokeDashoffset="1.600" /></g>,
  globe: <g><circle cx="12" cy="12" r="10.500" fill="#ccd3d8" /><path d="M5 17Q6 5 18 5q-8 3-7 12-3 3-6 0z" fill="#58a84c" /><path d="M11 8q9 0 11 6-2 6-6 8 1-9-5-14z" fill="#2a76b8" /><path d="M9 6q8-1 12 5-5-3-9-2z" fill="#fff" /></g>,
  skype: <g><circle cx="11" cy="11" r="10" fill="#00aff0" /><path d="M15 7q-3-3-6.500-1.500T8.500 10q2 1 4 1.500T14 15q-3 3-7 0" fill="none" stroke="#fff" strokeWidth="2.500" /><circle cx="18" cy="19" r="4.800" fill="#6cb510" stroke="#fff" strokeWidth=".6" /><path d="M16 19l1.500 1.500L20 17.500" stroke="#fff" fill="none" strokeWidth="1.200" /></g>,
  excel: <g><path d="M13 3h9v18h-9z" fill="#fff" stroke="#1e7145" /><path d="M14 7h7M14 10.500h7M14 14h7M14 17.500h7M17.500 4v16" stroke="#1e7145" /><path d="M2 3l12-2v22L2 21z" fill="#1e7145" /><text x="4" y="16" fontSize="10" fontWeight="700" fill="#fff">X</text></g>,
  word: <g><path d="M13 3h9v18h-9z" fill="#fff" stroke="#2b579a" /><path d="M14 7h7M14 10h7M14 13h7M14 16h7" stroke="#2b579a" /><path d="M2 3l12-2v22L2 21z" fill="#2b579a" /><text x="3" y="16" fontSize="10" fontWeight="700" fill="#fff">W</text></g>,
  speaker: <g><ellipse cx="12.500" cy="12" rx="8" ry="11" fill="#8f9294" /><ellipse cx="10.500" cy="12" rx="7" ry="10.500" fill="#d5d7d8" /><ellipse cx="10.500" cy="12" rx="4.500" ry="8" fill="#a8abad" /><ellipse cx="10" cy="12" rx="2.200" ry="4" fill="#eee" /></g>,
};
const Art = ({ kind, s }) => <svg width={s} height={s} viewBox="0 0 24 24" fontFamily={UI}>{ART[kind]}</svg>;
const PINNED = [['explorer', 1], ['store', 0], ['notepad', 1], ['calc', 0], ['snip', 0], ['chrome', 1], ['firefox', 1], ['gear', 1], ['globe', 0], ['skype', 1], ['excel', 1], ['word', 1], ['speaker', 1]];

function Taskbar({ large }) {
  const s = large ? 28 : 22, w = large ? 62.1 : 49, u = large ? 4 : 2;
  return (
    <Bar $h={large ? 50 : 40}>
      <TaskButton $w={large ? 60 : 48} $u={u}><Art kind="start" s={s} /></TaskButton>
      {large
        ? <SearchBox><svg width="27" height="27" fill="none" stroke="#000" strokeWidth="3.500"><circle cx="13.500" cy="13.500" r="11" /></svg><span>Type here to search</span><svg width="14" height="22" fill="none" stroke="#333" strokeWidth="1.600"><rect x="4" y="1" width="6" height="14" rx="3" /><path d="M1 10v5q0 4 6 4t6-4v-5M7 19v3" /></svg></SearchBox>
        : <TaskButton $w={48} $u={u}><Art kind="cortana" s={s} /></TaskButton>}
      <TaskButton $w={large ? 60.5 : 49.5} $u={u}><Art kind="task" s={large ? 25 : 20} /></TaskButton>
      {PINNED.map(([k, open]) => <TaskButton key={k} $w={w} $u={u} $open={!!open} $active={k === 'chrome'}><Art kind={k} s={s} /></TaskButton>)}
      <Spring />
      {large && (
        <svg width="150" height="46" fill="none" stroke="#fff" strokeWidth="1.500">
          <circle cx="18" cy="17" r="3.500" /><circle cx="10" cy="26" r="3.500" /><path d="M4 35q0-6 6-6t6 6M14 24q2-4 6-3 4 1 4 6" />
          <path d="M50 28l7-8 7 8" /><path d="M81 20h14v10H81zM79 16v5" /><path d="M83 22h10v6H83z" fill="#fff" />
          <path d="M110 17h17v12h-17zM114 33h9M118 29v4M108 22v8" /><path d="M138 21h3l5-4v14l-5-4h-3zM149 20q3 4 0 8M152 17q6 7 0 14" />
        </svg>
      )}
      <ClockText $f={large ? 14.3 : 11.1} $w={large ? 120 : 70} $mr={large ? 10 : 2}><span>18:29</span><span>14/06/2018</span></ClockText>
      {large && <svg width="40" height="46" fill="none" stroke="#fff" strokeWidth="1.400"><path d="M1 14h19v19h-6l-3.500 4-3.500-4H1z" /><path d="M35.500 0v50" stroke="#555" strokeWidth="1" /></svg>}
    </Bar>
  );
}

/* ---------- Chrome frame ---------- */

const FAV = {
  mantis: <g><path d="M1 10l4 5-1 1H1zM15 10l-4 5 1 1h3z" fill="#3aa02c" /><path d="M3 3h10l-2 7-3 5-3-5z" fill="#52b52f" /><circle cx="5" cy="5" r="2.500" fill="#ffd61a" /><circle cx="11" cy="5" r="2.500" fill="#ffd61a" /><path d="M4.500 4h1v2h-1zM10.500 4h1v2h-1z" /><path d="M3 9l3 6-4-3zM13 9l-3 6 4-3z" fill="#187d23" /></g>,
  a: <g><path d="M0 0h16v16H0z" fill="#fff" /><path d="M3 3.500h6.500q3 0 3 3V12q0 1.500-1.500 1.500H6Q3.500 13.500 3.500 11T6 8.500h6.500" fill="none" stroke="#0f9b8e" strokeWidth="2.600" /></g>,
  ucl: <g><path d="M0 0h16v10H0z" fill="#000" /><path d="M0 9.500h16V16H0z" fill="#f4a552" /><path d="M2 5v3.500h2V5M9 5H6.500v3.500H9M11 4.500v4h3" stroke="#f4a552" strokeWidth="1.200" fill="none" /></g>,
  uclb: <g><path d="M0 0h16v10H0z" fill="#2aa5cf" /><path d="M0 9.500h16V16H0z" fill="#f08300" /><path d="M2 5v3.500h2V5M9 5H6.500v3.500H9M11 4.500v4h3" stroke="#f4a552" strokeWidth="1.200" fill="none" /></g>,
  page: <path d="M3 .8h6.500l3.500 4v10.400H3zM9.500.8V5H13" fill="#fff" stroke="#6b6b6b" strokeWidth="1.200" />,
  cloud: <path d="M3 12Q0 10 1 7q1-3 4-3 3-2 5 0 4-1 5 3 1 4-3 5-3 3-6 1-2 1-3-1z" fill="#0f9be0" />,
  outlook: <g><path d="M8 3h8v10H8z" fill="#fff" stroke="#0072c6" /><path d="M8 4l4 4 4-4" stroke="#0072c6" fill="none" /><path d="M0 1.500L10 0v16L0 14.500z" fill="#0072c6" /><circle cx="5" cy="8" r="2.300" fill="none" stroke="#fff" strokeWidth="1.500" /></g>,
  teams: <g><path d="M9 5h6v6q0 2-3 2H9z" fill="#7b83c9" /><circle cx="12" cy="3" r="2" fill="#7b83c9" /><path d="M0 1.500L9 0v16l-9-1.500z" fill="#4b53a8" /><path d="M2.500 5.500h4.500M4.800 5.500V11" stroke="#fff" strokeWidth="1.500" /></g>,
  blue: <g fill="none" stroke="#1176a8" strokeWidth="2"><circle cx="8" cy="8" r="6.500" fill="#fff" /><path d="M10 4.500L6 8l4 3.500z" fill="#1176a8" stroke="none" /></g>,
  green: <g fill="none" stroke="#14998a" strokeWidth="2"><circle cx="8" cy="8" r="6.500" fill="#fff" /><path d="M10 4.500L6 8l4 3.500z" fill="#14769a" stroke="none" /></g>,
  citrix: <g fill="none" stroke="#555"><circle cx="8" cy="8" r="6.500" strokeWidth="2" /><circle cx="8" cy="8" r="3.700" strokeWidth="1.300" /><circle cx="8" cy="8" r="1.200" fill="#555" /></g>,
  cm: <g><path d="M1 3l7 1 6-1-3 8-7-2z" fill="#b8cbe6" stroke="#6a8fc7" /><path d="M6 10l3 5 2-4z" fill="#e3c64b" /></g>,
  docs: <g><rect x="1" width="14" height="16" rx="1" fill="#4285f4" /><path d="M4 5h8M4 7.500h8M4 10h8M4 12.300h5" stroke="#fff" /></g>,
  x: <path d="M2 2q5 2 6 6t5 6M14 2q-5 2-6 6t-5 6M1 1l3 3M15 1l-3 3M1 14q2-1 4 1M15 14q-2-1-4 1" stroke="#17376e" strokeWidth="2.100" fill="none" />,
  m: <g><rect width="16" height="16" rx="2.500" fill="#65306b" /><path d="M2 1l4 1v3" stroke="#222" strokeWidth="2" /><path d="M3.500 6v7M7 13V7.500q2-2 3 0V13M10.500 7.500q2-2 3 0V13" stroke="#fff" strokeWidth="1.900" fill="none" /></g>,
  cog: <g fill="none" stroke="#2079e8"><circle cx="8" cy="8" r="4" strokeWidth="3" /><circle cx="8" cy="8" r="6.300" strokeWidth="2.500" strokeDasharray="2.500 2.450" /></g>,
};
const Fav = ({ kind, s }) => <svg width={s} height={s} viewBox="0 0 16 16">{FAV[kind]}</svg>;

const Frame = styled.div`position: relative; display: flex; flex-direction: column; flex: none; background: #f2f2f2;`;
const Strip = styled.div`
  display: flex; flex: none; height: ${p => p.$h}px; padding-left: ${p => p.$pl}px; background: ${p => p.$bg};
  border-top: 1px solid #8d8d8d; border-bottom: 1px solid #a2a2a2; align-items: center;
`;
const Tab = styled.div`
  position: relative; display: flex; align-items: center; flex: none; height: ${p => p.$h}px; width: ${p => p.$w}px;
  margin-right: -${p => p.$over}px; padding: 0 ${p => p.$pr}px 0 ${p => p.$pad}px; z-index: ${p => p.$z};
  align-self: flex-end; margin-bottom: -1px; font-size: ${p => p.$f}px; color: #555;
  &::before, &::after { content: ''; position: absolute; z-index: -1; }
  &::before { inset: 0; background: #979797; clip-path: polygon(0 100%, ${p => p.$over}px 0, calc(100% - ${p => p.$over}px) 0, 100% 100%); }
  &::after { inset: 1px 1.5px ${p => (p.$on ? 0 : 1)}px; background: ${p => (p.$on ? '#f2f2f2' : '#d0d0d0')};
    clip-path: polygon(0 100%, ${p => p.$over}px 0, calc(100% - ${p => p.$over}px) 0, 100% 100%); }
`;
const TabText = styled.span`
  flex: 1; overflow: hidden; color: #4a4a4a; margin-left: ${p => p.$ml}px; height: 20px; line-height: 20px;
  mask-image: linear-gradient(90deg, #000 calc(100% - ${p => p.$fade}px), transparent);
`;
const NewTab = styled.i`
  width: ${p => p.$w}px; height: ${p => p.$h}px; margin-left: 17px; background: ${p => p.$bg}; border: 1px solid #aaa; border-radius: 2px;
  transform: skewX(22deg);
`;
const Tools = styled.div`
  display: flex; align-items: center; flex: none; height: ${p => p.$h}px; position: relative; z-index: 30; background: #f2f2f2;
`;
const Omni = styled.div`
  display: flex; align-items: center; flex: 1; height: ${p => p.$h}px; padding: 0 ${p => p.$h / 4}px 0 9px; background: #fff; border: 1px solid #b0b0b0; border-radius: 3px;
  font-size: ${p => p.$f}px; color: #808080;
  em { font-style: normal; color: #0b8043; } b { font-weight: 400; color: #111; }
  > i { width: 1px; height: 56%; background: #bbb; margin: 0 ${p => p.$g}px 0 ${p => p.$g - 2}px; }
`;
const Marks = styled.div`
  display: flex; align-items: center; flex: none; height: ${p => p.$h}px; padding: 0 ${p => p.$pr}px 2px ${p => p.$pl}px;
  border-bottom: 1px solid #b4b4b4; font-size: ${p => p.$f}px; color: #1f1f1f;
`;
const Mark = styled.span`display: flex; align-items: center; flex: none; width: ${p => p.$w}px; gap: ${p => p.$g}px;`;
const Extension = styled.i`
  flex: none; width: ${p => p.$s}px; height: ${p => p.$s}px; border-radius: ${p => (p.$round ? '50%' : '3px')}; margin-left: ${p => p.$ml}px;
  ${p => (p.$round
    ? css`background: radial-gradient(circle, #2b2b2b 12%, transparent 13%), conic-gradient(#3c5, #26c, #b3c, #c33, #aa3, #3c5); border: ${p.$s / 4}px solid #2a2c33;`
    : css`background: radial-gradient(circle, #fff 18%, #9a9a9a 20%, #c4c4c4 36%, #fff 42%);`)}
`;
const NavArrow = ({ s, c, flip }) => (
  <svg width={s} height={s} viewBox="0 0 16 16" fill="none" stroke={c} strokeWidth="1.900" transform={flip ? 'scale(-1 1)' : undefined}><path d="M15 8H2M8 2L2 8l6 6" /></svg>
);

function ChromeFrame({ k, d }) {
  const grey = '#5f6368';
  return (
    <Frame>
      <Strip $h={d.stripH} $pl={d.stripPl} $bg={d.stripBg}>
        {d.tabs.map(([fav, t], i) => (
          <Tab key={i} $h={d.stripH - 2} $w={d.tabW} $over={d.over} $pad={d.tabPad} $pr={d.tabPr} $f={d.f} $on={i === d.active} $z={i === d.active ? 25 : 20 - i}>
            <Fav kind={fav} s={d.fav} /><TabText $ml={d.tabGap} $fade={d.fade}>{t}</TabText>
            <svg width={9 * k} height={9 * k} viewBox="0 0 9 9" stroke="#333" strokeWidth="1.700"><path d="M1 1l7 7M8 1L1 8" /></svg>
          </Tab>
        ))}
        <NewTab $w={28 * k} $h={17 * k} $bg={d.stripBg} />
        <Spring />
        <WinControls $gap={d.ctl} $c={k > 1 ? '#111' : '#777'} $k={k} profile />
      </Strip>
      <Tools $h={d.toolH}>
        <Slot $w={d.nav[0]}><NavArrow s={16 * k} c={k > 1 ? grey : '#ccc'} /></Slot>
        <Slot $w={d.nav[1]}><NavArrow s={16 * k} c="#ccc" flip /></Slot>
        <Slot $w={d.nav[2]}><svg width={16 * k} height={16 * k} viewBox="0 0 16 16" fill="none" stroke={grey} strokeWidth="2"><path d="M13.500 10A6 6 0 1 1 13 4.500M14 1v5H9" /></svg></Slot>
        <Omni $h={d.omniH} $f={d.urlF} $g={9 * k + 1.5}>
          <FaLock size={10.5 * k} color="#0b8043" /><em style={{ marginLeft: 8 * k, fontSize: d.secureF }}>Secure</em><i />
          <span><em>https</em>://<b>{d.host}</b>{d.path}</span><Spring />
          <svg width={14 * k} height={14 * k} viewBox="0 0 16 16" fill="none" stroke="#555" strokeWidth="1.500"><path d="M8 1l2.200 4.800 5 .6-3.700 3.500 1 5L8 12.400l-4.500 2.500 1-5L.8 6.400l5-.6z" /></svg>
        </Omni>
        <Extension $round $s={17 * k} $ml={9 * k} /><Extension $s={16 * k} $ml={14 * k + 1} />
        <Slot $w={38.500 * k}><svg width="4" height={14 * k} fill={grey}><circle cx="2" cy="2" r="1.700" /><circle cx="2" cy={7 * k} r="1.700" /><circle cx="2" cy={14 * k - 2} r="1.700" /></svg></Slot>
      </Tools>
      <Marks $h={d.marksH} $pl={d.marksPl} $pr={d.marksPr} $f={d.f}>
        {d.marks.map(([fav, t, w]) => <Mark key={t} $w={w} $g={d.markGap}><Fav kind={fav} s={d.fav} />{t}</Mark>)}
        <Spring /><span style={{ fontSize: d.f * 1.2 }}>»</span>
      </Marks>
    </Frame>
  );
}

const MANTIS_CHROME = {
  stripH: 28, stripPl: 5, stripBg: '#f3f3f3', tabW: 205, over: 12, tabPad: 13, tabPr: 17, tabGap: 6, fade: 16, fav: 16, f: 11.28, ctl: 46, active: 4,
  toolH: 36, nav: [32, 28, 31], omniH: 28, urlF: 13.27, secureF: 13.27, host: 'www.ucl.ac.uk', path: '/mantis/view.php?id=7543',
  marksH: 28, marksPl: 9, marksPr: 16, markGap: 12,
  tabs: [['mantis', 'View Issues - MantisBT'], ['mantis', '0007512: Padding between'], ['a', 'Course: CODEXXXX: UCL M'], ['a', 'Course: Achieving Blended'], ['mantis', '0007543: Collapsed Topics'], ['mantis', '0007501: Closing Turnitin s'], ['mantis', '0007502: Submission inbox'], ['mantis', '0007505: Drag and drop of']],
  marks: [['cloud', 'RM', 58], ['outlook', 'Mail', 62], ['teams', 'Teams', 74], ['ucl', 'AEDX', 69], ['a', 'MIPUAT', 82], ['blue', 'ALP', 61], ['ucl', 'UCL Dir', 81], ['ucl', 'UCLM Users', 105], ['ucl', 'UCLM Search', 111], ['ucl', 'MDL AED', 91], ['page', 'UCL MA', 84], ['ucl', 'MDL Dev', 89], ['page', 'Diigolet', 82], ['citrix', 'Citrix', 67], ['green', 'ESS', 59], ['page', 'UCL Tools', 92], ['page', 'LCScheduler', 106], ['cm', 'CM', 58], ['page', 'M 3.1.5 Test', 103], ['page', 'LC Sched UAT', 113], ['ucl', 'UCLX', 69], ['ucl', 'XUsers', 76], ['ucl', 'XSearch', 80]],
};
const MOODLE_CHROME = {
  stripH: 36, stripPl: 6, stripBg: '#cdcdcd', tabW: 95.3, over: 15, tabPad: 19, tabPr: 20, tabGap: 8, fade: 4, fav: 20, f: 14.1, ctl: 57, active: 2,
  toolH: 45, nav: [43, 36, 37], omniH: 35, urlF: 16.69, secureF: 16, host: 'v34.moodle-01-u.ucl.ac.uk', path: '/course/view.php?id=2114',
  marksH: 35, marksPl: 12, marksPr: 23, markGap: 16,
  tabs: [['docs', 'MI'], ['x', 'E'], ['a', 'C'], ['page', 'U'], ['x', 'ic'], ['x', 'T'], ['ucl', 'C'], ['uclb', 'C'], ['uclb', 'C'], ['ucl', 'L'], ['ucl', 'C'], ['ucl', 'C'], ['ucl', 'L'], ['ucl', 'C'], ['m', 'P'], ['a', 'M'], ['m', 'L'], ['m', 'E'], ['ucl', 'C'], ['cog', 'S']],
  marks: [['cloud', 'RM', 73], ['outlook', 'Mail', 79], ['teams', 'Teams', 91], ['ucl', 'AEDX', 86], ['a', 'MIPUAT', 103], ['blue', 'ALP', 76], ['ucl', 'UCL Dir', 101], ['ucl', 'UCLM Users', 132], ['ucl', 'UCLM Search', 138], ['ucl', 'MDL AED', 114], ['page', 'UCL MA', 105], ['ucl', 'MDL Dev', 111], ['page', 'Diigolet', 103], ['citrix', 'Citrix', 84], ['green', 'ESS', 73], ['page', 'UCL Tools', 114.5], ['page', 'LCScheduler', 132.5], ['cm', 'CM', 60]],
};

const PageRow = styled.div`display: flex; flex: none; height: ${p => p.$h}px;`;
const Scroll = styled.div`
  display: flex; flex-direction: column; align-items: center; flex: none; width: ${p => p.$w}px; background: #f1f1f1;
  font-size: 9px; line-height: ${p => p.$w}px; color: #8a8a8a;
  i { flex: none; width: ${p => p.$w - 3}px; height: ${p => p.$t}px; background: #c1c1c1; }
  span { margin-top: auto; color: #505050; }
`;

/* ---------- Mantis page ---------- */

const MPage = styled.div`flex: 1; overflow: hidden; padding: 0 4px 0 3px; background: #fff; font: 13.5px ${VERDANA}; color: #000;`;
const Link = styled.a`color: ${p => (p.$v ? '#551a8b' : '#0000ee')}; text-decoration: underline; text-decoration-thickness: 1px;`;
const LoginRow = styled.div`
  display: grid; grid-template-columns: 1fr auto 1fr; align-items: center; height: 20px; margin-top: 1px; padding: 0 6px 0 3px;
  small { font-size: 10.9px; }
`;
const ProjectPick = styled.div`display: flex; align-items: center; justify-content: flex-end; font-size: 13px;`;
const Select = styled.span`
  display: flex; align-items: center; justify-content: space-between; width: ${p => p.$w}px; height: ${p => p.$h}px; margin-left: ${p => p.$ml || 0}px; padding: 0 5px 0 4px;
  background: #fff; border: 1px solid #999; font: ${p => p.$f}px ${ARIAL}; i { border: 4px solid transparent; border-top: 7px solid #000; border-bottom: 0; }
`;
const Button = styled.span`
  display: inline-flex; align-items: center; justify-content: center; flex: none; width: ${p => p.$w}px; height: ${p => p.$h}px; margin-left: ${p => p.$ml || 0}px;
  background: linear-gradient(#f6f6f6, #dedede); border: 1px solid #a0a0a0; font: ${p => p.$f}px ${ARIAL}; color: #000;
`;
const TextInput = styled.span`
  display: inline-flex; align-items: center; width: ${p => p.$w}px; height: ${p => p.$h}px; margin-left: ${p => p.$ml || 0}px; padding-left: 2px; background: #fff; border: 1px solid #999; font: 10.7px ${ARIAL};
`;
const MenuBar = styled.nav`
  display: grid; grid-template-columns: auto 1fr; align-items: center; height: 30px; margin: 5px 0 0; padding: 0 9px 0 566px; background: #e8e8e8; border: 1px solid #000; font-size: 13.75px;
`;
const Recent = styled.div`height: 23px; padding: 0 3px; text-align: right; font-size: 11.15px; line-height: 20px;`;
const Sec = styled.section`
  display: grid; grid-template-columns: 284px 378px 283px 283px 283px 1fr; gap: 1px; padding: 1px; border: 1px solid #000; background: #fff;
  margin-top: ${p => p.$mt}px; ${p => p.$ml && css`margin-left: ${p.$ml}px; margin-right: 2px;`}
`;
const Td = styled.div`
  grid-column: span ${p => p.$span || 1}; min-height: ${p => p.$h || 24}px; padding: 0 4px; line-height: 24px; font-size: ${p => (p.$th ? 13.4 : 13.45)}px;
  background: ${p => (p.$th ? '#c8c8e8' : p.$bg || 'transparent')}; font-weight: ${p => (p.$th || p.$b ? 700 : 400)};
  small { font-size: 10.9px; font-weight: 400; }
`;
const TitleTd = styled(Td)`display: flex; justify-content: space-between; padding-left: ${p => p.$pl || 4}px; line-height: 25px; height: 24px;`;
const A = '#d8d8d8', B = '#e8e8e8';
const Fold = styled.i`
  display: inline-flex; align-items: center; justify-content: center; width: 9px; height: 9px; margin-right: ${p => p.$gap || 4}px; border: 1px solid #333; border-radius: 2px; vertical-align: 0;
  &::after { content: ''; width: 5px; height: 1px; background: #000; }
`;
const Attach = styled.div`display: flex; align-items: center; height: 29px; small { width: 100px; }`;
const Steps = styled.div`line-height: 16px; padding: 5px 0 3px;`;
const NoteArea = styled.div`width: 584px; height: 90px; margin-top: 2px; background: #fff; border: 1px solid #a9a9a9;`;
const Downloads = styled.footer`
  display: flex; align-items: center; flex: none; height: 47px; padding: 0 12px 0 21px; background: #f2f2f2; border-top: 1px solid #bdbdbd; font-size: 11.9px; color: #333;
`;

const MantisLogo = () => (
  <svg width="250" height="96" fill="none">
    <path d="M9 37Q-1 14 12 15 30 18 49 40" stroke="#1f8a3b" strokeWidth="2" />
    <path d="M57 38Q66 15 86 9q16-4 25 1" stroke="#5aa82c" strokeWidth="2" />
    <path d="M21 52Q50 66 52 86q-20-10-31-34z" fill="#3f9c35" /><path d="M82 36q12 8-4 36l-10 14q-14-8 14-50z" fill="#5cb030" />
    <path d="M38 42q14-12 30 0l-6 16-9 6-9-6z" fill="#2c9138" /><path d="M38 42q14-12 30 0-15 6-30 0z" fill="#7cc22d" />
    <ellipse cx="44" cy="46" rx="7.500" ry="9" fill="#ffd81c" /><ellipse cx="61" cy="46" rx="7.500" ry="9" fill="#ffd81c" />
    <circle cx="43" cy="47" r="2.500" fill="#111" /><circle cx="58" cy="47" r="2.500" fill="#111" />
    <path d="M30 58l22 27M80 44L64 80" stroke="#1b6e2a" strokeWidth="1.500" />
    <text x="90" y="69" fontFamily='"Open Sans", sans-serif' fontWeight="700" fontSize="53" fill="#04502f" textLength="145" lengthAdjust="spacingAndGlyphs">mantis</text>
    <text x="91" y="82" fontFamily='"Open Sans", sans-serif' fontWeight="700" fontSize="13.500" fill="#6a6a6a" textLength="144">BUG TRACKER</text>
  </svg>
);

function Mantis() {
  return (
    <Monitor $x={1920} $y={0} $h={1200}>
      <ChromeFrame k={1} d={MANTIS_CHROME} />
      <PageRow $h={1021}>
        <MPage>
          <MantisLogo />
          <LoginRow>
            <span>Logged in as: <i>ccaaae0</i> <small>(Annora Eyt-Dessus - reporter)</small></span>
            <i style={{ fontSize: 13.8 }}>2018-06-14 16:55 BST</i>
            <ProjectPick>Project:<Select $w={270} $h={16} $ml={6} $f={10.64}>Moodle Improvement Project (MIP)<i /></Select><Button $w={47} $h={18} $ml={5} $f={10.7}>Switch</Button>
              <svg width="16" height="16" style={{ marginLeft: 5 }} fill="none" stroke="#fff" strokeWidth="2"><rect width="16" height="16" rx="3" fill="#f08a32" stroke="none" /><path d="M3 7.500q6 0 6 6M3 3.500q10 0 10 10" /><circle cx="4.500" cy="12" r="1" fill="#fff" stroke="none" /></svg>
            </ProjectPick>
          </LoginRow>
          <MenuBar>
            <span><Link $v>Main</Link> | <Link $v>My View</Link> | <Link $v>View Issues</Link> | <Link $v>Report Issue</Link> | <Link>Change Log</Link> | <Link>Roadmap</Link> | <Link $v>My Account</Link> | <Link>Logout</Link></span>
            <Row style={{ justifyContent: 'flex-end' }}><TextInput $w={77} $h={18}>Issue #</TextInput><Button $w={42} $h={18} $ml={5} $f={10.7}>Jump</Button></Row>
          </MenuBar>
          <Recent>Recently Visited: {['0007544', '0007575', '0007600', '0007601', '0007602'].map((n, i) => <React.Fragment key={n}>{i > 0 && ', '}<Link $v>{n}</Link></React.Fragment>)}</Recent>
          <Sec $mt={12}>
            <TitleTd $span={2}><span><b style={{ fontSize: 13.4 }}>View Issue Details</b> [ <Link>Jump to Notes</Link> ]</span></TitleTd>
            <TitleTd $span={4} $pl={380}><span>[ <Link $v>&lt;&lt;</Link> ] [ <Link $v>&gt;&gt;</Link> ]</span><span>[ <Link>Issue History</Link> ] [ <Link>Print</Link> ]</span></TitleTd>
            {['ID', 'Project', 'Category', 'View Status', 'Date Submitted', 'Last Update'].map(t => <Td key={t} $th>{t}</Td>)}
            {['0007543', 'Moodle Improvement Project (MIP)', 'Core', 'public', '2018-05-17 19:46', '2018-05-17 19:46'].map((t, i) => <Td key={i} $bg={A}>{t}</Td>)}
            <Td $span={6} $h={8} style={{ lineHeight: 0 }} />
            <Td $th>Reporter</Td><Td $bg={B}>George Lekeas</Td><Td $span={4} $bg={B} />
            <Td $th>Assigned To</Td><Td $bg={A}>George Lekeas</Td><Td $span={4} $bg={A} />
            <Td $th>Priority</Td><Td $bg={B}>normal</Td><Td $th>Severity</Td><Td $bg={B}>minor</Td><Td $th>Reproducibility</Td><Td $bg={B}>always</Td>
            <Td $th>Status</Td><Td $bg="#fff">unconfirmed</Td><Td $th>Resolution</Td><Td $bg={A}>open</Td><Td $span={2} $bg={A} />
            <Td $th>Platform</Td><Td $bg={B}>Desktop@UCL Staff Build</Td><Td $th>OS</Td><Td $bg={B}>Windows</Td><Td $th>OS Version</Td><Td $bg={B}>7</Td>
            <Td $span={6} $h={8} style={{ lineHeight: 0 }} />
            <Td $th>Summary</Td><Td $span={5} $bg={A}>0007543: Collapsed Topics - Moving Sections</Td>
            <Td $th>Description</Td><Td $span={5} $bg={B}>When you double-click on the handle to move a topic in collapsed topics format, if you select the second one the first topic does not appear on the list (any other topic selected will include it).</Td>
            <Td $th>Steps To Reproduce</Td><Td $span={5} $bg={A} $h={56}><Steps>- Go to a course with collapsed topics format (e.g. <Link>https://v34.moodle-01-u.ucl.ac.uk/course/view.php?id=2062&notifyeditingon=1</Link> [<Link>^</Link>])<br />- Turn Editing on<br />- Double-click on the handle of the second topic.</Steps></Td>
            <Td $th>Additional Information</Td><Td $span={5} $bg={B}>Mozilla Firefox 56.0.2 (64-bit)</Td>
            <Td $th>Tags</Td><Td $span={5} $bg={A}>No tags attached.</Td>
            <Td $th>Attach Tags</Td><Td $span={5} $bg={B}><Attach><small>(Separate by ",")</small><TextInput $w={313} $h={21} /><Select $w={143} $h={19} $ml={5} $f={12.3}>Existing tags<i /></Select><Button $w={53} $h={21} $ml={5} $f={12.3}>Attach</Button></Attach></Td>
            <Td $span={6} $h={8} style={{ lineHeight: 0 }} />
            <Td $th>Attached Files</Td><Td $span={5} $bg={A} />
            <Td $span={6} $h={40} style={{ padding: '8px 0 0 40px' }}><Button $w={61} $h={21} $f={12.3}>Monitor</Button></Td>
          </Sec>
          <Sec $mt={20} $ml={3}><Td $span={6} $h={33} $b><Fold />Relationships</Td></Sec>
          <Sec $mt={22} $ml={3}>
            <Td $span={6} $h={24} $b><Fold />Upload File</Td>
            <Td $th $h={39} style={{ lineHeight: '16px', paddingTop: 3 }}>Select File<br /><small>(Maximum size: 5,000k)</small></Td>
            <Td $span={5} $bg={A} $h={39}><Row $h={36}><Button $w={83} $h={21} $f={12.4}>Choose file</Button><Slot $w={170} $left $ml={5} style={{ font: `12.4px ${ARIAL}` }}>No file chosen</Slot><Button $w={84} $h={21} $f={12.4}>Upload File</Button></Row></Td>
          </Sec>
          <Sec $mt={18} $ml={3}><Td $span={6} $h={24} $b><Fold $gap={11} />Notes</Td><Td $span={6} $h={24} style={{ textAlign: 'center' }}>There are no notes attached to this issue.</Td></Sec>
          <Sec $mt={22} $ml={3} style={{ gridTemplateColumns: '472px 1fr' }}>
            <Td $span={2} $h={23} $b style={{ lineHeight: '23px' }}><Fold />Add Note</Td>
            <Td $th $h={90}>Note</Td><Td $bg={A} $h={90}><NoteArea /></Td>
          </Sec>
        </MPage>
        <Scroll $w={16} $t={741}>▲<i /><span>▼</span></Scroll>
      </PageRow>
      <Downloads>
        <Fav kind="page" s={17} /><Slot $w={153} $left $ml={10}>Moodle_improve....xml</Slot>
        <svg width="9" height="6" fill="none" stroke="#666" strokeWidth="1.600"><path d="M0 5l4.500-4L9 5" /></svg>
        <Spring /><Button $w={78} $h={26} $f={11.5} style={{ background: '#fff', fontFamily: 'Open Sans', borderRadius: 3 }}>Show all</Button>
        <Slot $w={12} $ml={12}><svg width="9" height="9" stroke="#444" strokeWidth="1.600"><path d="M0 0l9 9M9 0L0 9" /></svg></Slot>
      </Downloads>
      <Taskbar />
    </Monitor>
  );
}

/* ---------- Moodle page ---------- */

const Site = styled.div`
  position: relative; display: flex; flex-direction: column; width: 1900px; overflow: hidden; background: #87887f; font-size: 17.5px; color: #2b2d2e;
`;
const Banner = styled.div`flex: none; height: 24px; line-height: 26px; padding-left: 596px; background: #80511c; color: #9d9c98; font-weight: 700; font-size: 17.43px;`;
const Inner = styled.div`flex: 1; display: flex; flex-direction: column; border: solid #80511c; border-width: 0 2px 0 3px;`;
const LogLine = styled.div`height: 36px; line-height: 24px; flex: none; font-size: 18px; span { color: #063f4c; }`;
const TopBar = styled.div`
  display: flex; align-items: center; flex: none; height: 45px; padding: 0 0 2px 1357px; background: #19646b; border-bottom: 1px solid #899a98; color: #9c9e99;
`;
const Avatar = styled.i`
  width: 32px; height: 32px; border-radius: 50%; margin: 0 6px 0 45px; overflow: hidden;
  background: radial-gradient(circle at 50% 36%, #a0a09e 7px, transparent 8px), radial-gradient(ellipse at 50% 100%, #a0a09e 11px, transparent 12px), #8a8b88;
`;
const SiteHead = styled.div`display: flex; flex: none; height: 115px; padding: 0 0 0 219px; background: #004f56; color: #979a95;`;
const Wordmark = styled.div`
  display: flex; width: 271px; height: 76px; margin: 23px 21px 0 0; overflow: hidden; color: #8f9089;
  svg { margin-top: 5px; }
  b { font: 700 104px ${ARIAL}; letter-spacing: 6px; margin: -14px 0 0 7px; -webkit-text-stroke: 12px #8f9089; }
`;
const CourseTitle = styled.h1`margin: 9px 0 0; width: 776px; font-size: 35px; font-weight: 400; line-height: 48px;`;
const SearchField = styled.div`
  display: flex; align-items: center; justify-content: space-between; width: 391px; height: 37px; margin-top: 13px; padding: 0 7px 1px 6px; background: #979797; color: #565656;
`;
const NavArea = styled.div`flex: none; height: 98px; padding-left: 195px; background: #8e8e8e;`;
const NavRow = styled.nav`display: flex; height: 50px;`;
const NavButton = styled.span`
  display: flex; align-items: center; justify-content: center; gap: ${p => p.$g || 10}px; width: ${p => p.$w}px; margin-right: ${p => p.$mr || 5}px; padding-bottom: 1px; flex: none; background: #0d2f37; color: #979a99;
`;
const EditToggle = styled.span`
  display: flex; align-items: center; justify-content: center; gap: 3px; width: 163px; height: 36px; margin: 7px 0 0 1306px; padding-bottom: 1px; border-radius: 6px; background: #013c49; color: #9a9a97;
`;
const Crumbs = styled.div`display: flex; align-items: center; gap: 12px; flex: none; height: 100px; padding: 12px 0 0 222px; font-size: 18px;`;
const Columns = styled.div`display: flex; flex: 1; padding-left: 215px; gap: 37px;`;
const Main = styled.div`width: 1088px; padding: 6px 5px 0 8px; background: #92938c; position: relative;`;
const General = styled.div`height: 205px; padding: 28px 0 0 78px; background: #8c8c8c; color: #5e5e5e;`;
const ActivityRow = styled.div`display: flex; margin: 20px 0 0 0;`;
const Activity = styled.div`
  display: flex; align-items: center; flex: 1; height: 55px; margin-left: 11px; padding: 0 0 3px 12px; gap: 8px; background: #979797; border-left: 4px solid #5b0060; border-bottom: 2px dashed #8b8b8b;
  font-size: 18px; color: #0a4150;
`;
const Purple = styled.span`display: flex; align-items: center; justify-content: center; width: 40px; height: 40px; border-radius: 50%; background: #5b005f;`;
const Toggles = styled.div`display: flex; height: 63px; align-items: center; padding-left: 61px; margin-bottom: 2px; font-size: 24.4px; font-weight: 600; color: #600a35;`;
const Tri = styled.i`
  width: 0; height: 0; border: 8px solid transparent;
  ${p => (p.$down ? css`border-top: 16px solid #4b4d4a; border-bottom: 0;` : css`border-left: 16px solid #4b4d4a; border-right: 0;`)}
`;
const Instructions = styled.p`margin: 0 0 0 50px; height: 34px; line-height: 20px; font-size: 18px;`;
const Topic = styled.div`display: flex; height: 82px; margin-bottom: 18px; background: #8c8c8d; color: #5e5e5e;`;
const TopicBody = styled.div`
  display: flex; align-items: center; width: 976px; padding-left: 8px; border-radius: 8px;
  background: linear-gradient(90deg, transparent 92%, #8d9394), linear-gradient(#8d9394, #8e8f90 18%, #8f8f8f 80%, #8d9394);
  font-size: 24.4px; font-weight: 600; color: #053f4b;
`;
const PencilBox = styled.span`display: flex; align-items: center; justify-content: center; width: 35px; height: 35px; margin: 6px 0 0 8px; border-radius: 4px; background: #949494; color: #666;`;
const TopicSide = styled.div`
  display: flex; flex-direction: column; padding: 3px 0 0 10px; font-size: 18px; line-height: 26px; color: #2b3c40;
  svg { margin: 0 0 4px 1px; color: #5a5a5a; } i { margin-left: 2px; vertical-align: 8px; }
`;
const Block = styled.aside`width: 338px; padding: 16px 0 0; background: #92938c; color: #0a3c48; font-size: 18px;`;
const BlockHead = styled.div`
  display: flex; justify-content: space-between; height: 65px; padding: 8px 20px 0 62px; font-size: 19.6px; font-weight: 600; line-height: 28px; color: #05404c;
  svg { margin-top: -8px; }
`;
const BlockTools = styled.div`display: flex; justify-content: flex-end; gap: 6px; height: 65px; padding-right: 26px; color: #55575a;`;
const BlockItem = styled.div`display: flex; align-items: center; height: 38.85px; padding-left: ${p => p.$pl}px; span { width: 28px; flex: none; color: #55575a; padding-bottom: 4px; }`;

const Dialog = styled.div`
  position: absolute; left: 697px; top: 269px; width: 503px; height: 375px; background: #fff; border: 1px solid #b0b0b0; border-radius: 11px; overflow: hidden;
`;
const DialogShadow = styled.div`position: absolute; left: 697px; top: 269px; width: 503px; height: 375px; border-radius: 11px; box-shadow: 4px 7px 14px 3px rgba(30, 30, 30, .55);`;
const DialogTitle = styled.div`height: 38px; line-height: 38px; text-align: center; background: #006073; border-bottom: 2px solid #b5b5b5; color: #fff; font-size: 18px; font-weight: 600; letter-spacing: 1.35px; text-shadow: 1px 1px 1px #0005;`;
const DialogList = styled.ul`list-style: none; margin: 0; padding: 16px 0 0 46px; font-size: 14.92px; line-height: 35px; color: #0f5f78;`;
const Menu = styled.ul`
  position: absolute; left: 1144px; top: 269px; width: 314px; height: 376px; margin: 0; padding: 7px 0 0; list-style: none; background: #fff; border: 1px solid #adadad;
  font-size: 16.22px; line-height: 38px; color: #0f5f78;
  li { padding-left: 13px; height: 40px; } li:first-child { background: #ededed; }
`;
const Tip = styled.div`
  position: absolute; left: 1160px; top: 310px; width: 130px; height: 25px; line-height: 23px; text-align: center; background: #fff; border: 1px solid #767676; box-shadow: 3px 3px 2px rgba(0,0,0,.4);
  font-size: 14.33px; color: #575757;
`;
const LinkStatus = styled.div`
  position: absolute; left: 0; bottom: 0; width: 637px; height: 27px; padding-left: 3px; line-height: 27px; background: #f2f2f2; border-top: 1px solid #b5b5b5; border-right: 1px solid #b5b5b5; border-radius: 0 4px 0 0;
  font-size: 14.15px; color: #666;
`;
const Expand = () => <svg width="21" height="21" viewBox="0 0 16 16" fill="none" stroke="currentColor" strokeWidth="2.200"><path d="M9 7l5-5M7 9l-5 5" /><path d="M10 .5h5.500V6zM6 15.500H.5V10z" fill="currentColor" stroke="none" /></svg>;
const People = () => (
  <svg width="25" height="18" fill="none" stroke="#a89aa9" strokeWidth="1.400"><circle cx="12.500" cy="4.500" r="3" /><circle cx="5" cy="4" r="2.300" /><circle cx="20" cy="4" r="2.300" /><path d="M6.500 17v-4q0-4 6-4t6 4v4zM4.500 14H1V10q1-2 5-2M20.500 14H24V10q-1-2-5-2" /></svg>
);
const PencilLine = ({ s, c }) => <svg width={s} height={s} viewBox="0 0 18 18"><path d="M0 17l1-5L9 4l3 3-8 8zM10 3l2-2.500q1-1 2.500 0t.5 2.500L13 6zM8 16h10v1.500H8z" fill={c} /></svg>;

function Moodle() {
  const bullet = <span><Tri style={{ display: 'block', borderLeftWidth: 8, marginLeft: 7, borderLeftColor: '#55575a' }} /></span>;
  return (
    <Monitor $x={976} $y={1200} $h={1080}>
      <ChromeFrame k={1.25} d={MOODLE_CHROME} />
      <PageRow $h={914}>
        <Site>
          <Banner>This is the MIP UAT instance of Moodle 3.4. Any work that you do here will be lost!</Banner>
          <Inner>
            <LogLine>Please use this link to log any <span>issues</span></LogLine>
            <TopBar>
              <FaBell size={20} /><Slot $w={21} $ml={16}><FaComments size={21} /></Slot><Avatar />Annora Eyt-Dessus
              <Slot $w={32}><svg width="11" height="7" fill="none" stroke="#9c9e99" strokeWidth="1.600"><path d="M1 1l4.500 4.500L10 1" /></svg></Slot>
            </TopBar>
            <SiteHead>
              <Wordmark>
                <svg width="29" height="34" viewBox="0 0 29 38" preserveAspectRatio="none" fill="#8f9089"><path d="M14 0h1v5q6 2 6 8H8q0-6 6-8zM4 15h21v3H4zM4 20h3v11H4zM9.500 20h2.500v11H9.500zM14 20h2.500v11H14zM18.500 20H21v11h-2.500zM23 20h2.500v11H23zM2 32h25v2H2zM0 35h29v3H0z" /></svg>
                <b>UCL</b>
              </Wordmark>
              <CourseTitle>ZED0004: Postgraduate Stuff</CourseTitle>
              <SearchField>Search Courses<FaSearch size={16} color="#222" /></SearchField>
            </SiteHead>
            <NavArea>
              <NavRow>
                <NavButton $w={155}><FaTachometerAlt size={19} />My home</NavButton><NavButton $w={131}><FaCalendarAlt size={18} />Events</NavButton>
                <NavButton $w={172} $g={8}><FaBriefcase size={19} />My Courses</NavButton><NavButton $w={166} $g={6} $mr={10}><FaSitemap size={18} />This course</NavButton>
                <NavButton $w={130}>Staff Help</NavButton><NavButton $w={156}>Student Help</NavButton><NavButton $w={117} $mr={154}>Services</NavButton>
                <NavButton $w={134}><FaIndent size={24} />Hide blocks</NavButton><NavButton $w={123}><Expand />Full screen</NavButton>
              </NavRow>
              <EditToggle><FaPowerOff size={17} />Turn editing off</EditToggle>
            </NavArea>
            <Crumbs><FaHome size={22} color="#053f4b" /><span>›</span><span>My courses</span><span>›</span><span>ZED0004</span></Crumbs>
            <Columns>
              <Main>
                <General>
                  <FaCog size={20} style={{ marginLeft: 9 }} />
                  <ActivityRow>
                    <FaArrowsAlt size={20} style={{ marginTop: 7, marginLeft: -7 }} />
                    <Activity><Purple><People /></Purple>Announcements<PencilLine s={20} c="#858585" /></Activity>
                  </ActivityRow>
                </General>
                <Toggles><Tri />&#8202;Open all<Tri $down style={{ marginLeft: 35, marginRight: 4 }} />Close all</Toggles>
                <Instructions>Instructions: Clicking on the section name will show / hide the section.</Instructions>
                {['Section 1', 'Section 2'].map(t => (
                  <Topic key={t}>
                    <Slot $w={50} style={{ alignItems: 'flex-start', paddingTop: 18 }}><FaArrowsAlt size={20} /></Slot>
                    <TopicBody><Tri /><span style={{ marginLeft: 19 }}>{t}</span><PencilBox><PencilLine s={20} c="#666" /></PencilBox></TopicBody>
                    <TopicSide><FaCog size={20} /><span>Edit<Caret $s={4} /></span></TopicSide>
                  </Topic>
                ))}
              </Main>
              <Block>
                <BlockHead>Administration
                  <svg width="35" height="17" fill="none" stroke="#55575a" strokeWidth="1.500"><path d="M1 1h14v14H1zM1 3h14M4.500 9h7M20 1h14v14H20zM20 3h14M29 6l-3 3 3 3" /></svg>
                </BlockHead>
                <BlockTools><FaArrowsAlt size={15} /><FaCog size={12} /><Caret style={{ marginTop: 4 }} /></BlockTools>
                <BlockItem $pl={43}>Course administration</BlockItem>
                <BlockItem $pl={34}><span><FaCog size={20} /></span>Edit settings</BlockItem>
                <BlockItem $pl={34}><span><FaPencilAlt size={20} /></span>Turn editing off</BlockItem>
                <BlockItem $pl={34}>{bullet}Users</BlockItem>
                <BlockItem $pl={34}><span><FaUser size={20} /></span>Unenrol me from ZED0004</BlockItem>
                <BlockItem $pl={34}><span><FaFilter size={20} /></span>Filters</BlockItem>
                <BlockItem $pl={34}>{bullet}Reports</BlockItem>
                <BlockItem $pl={34}><span><FaCog size={20} /></span>Gradebook setup</BlockItem>
                <BlockItem $pl={34}><span><FaChartPie size={20} /></span>Outcomes</BlockItem>
              </Block>
            </Columns>
          </Inner>
          <DialogShadow />
          <Dialog>
            <DialogTitle>Move Section 2</DialogTitle>
            <DialogList>{[3, 4, 5, 6, 7, 8, 9, 10].map(n => <li key={n}>To item "Section {n}"</li>)}</DialogList>
          </Dialog>
          <Menu>{['Moodle Snapshot', 'Lynda', 'Box of Broadcasts', 'Portico', 'Common Timetable', 'Library', 'MyAccount', 'Live@UCL Email', 'MyPortfolio'].map(t => <li key={t}>{t}</li>)}</Menu>
          <Tip>Moodle Snapshot</Tip>
          <LinkStatus>https://moodle-snapshot.ucl.ac.uk</LinkStatus>
        </Site>
        <Scroll $w={20} $t={267}>▲<i /><span>▼</span></Scroll>
      </PageRow>
      <Taskbar large />
    </Monitor>
  );
}

export default function App() {
  return (
    <Desktop>
      <Global />
      <Excel />
      <Mantis />
      <Moodle />
    </Desktop>
  );
}
